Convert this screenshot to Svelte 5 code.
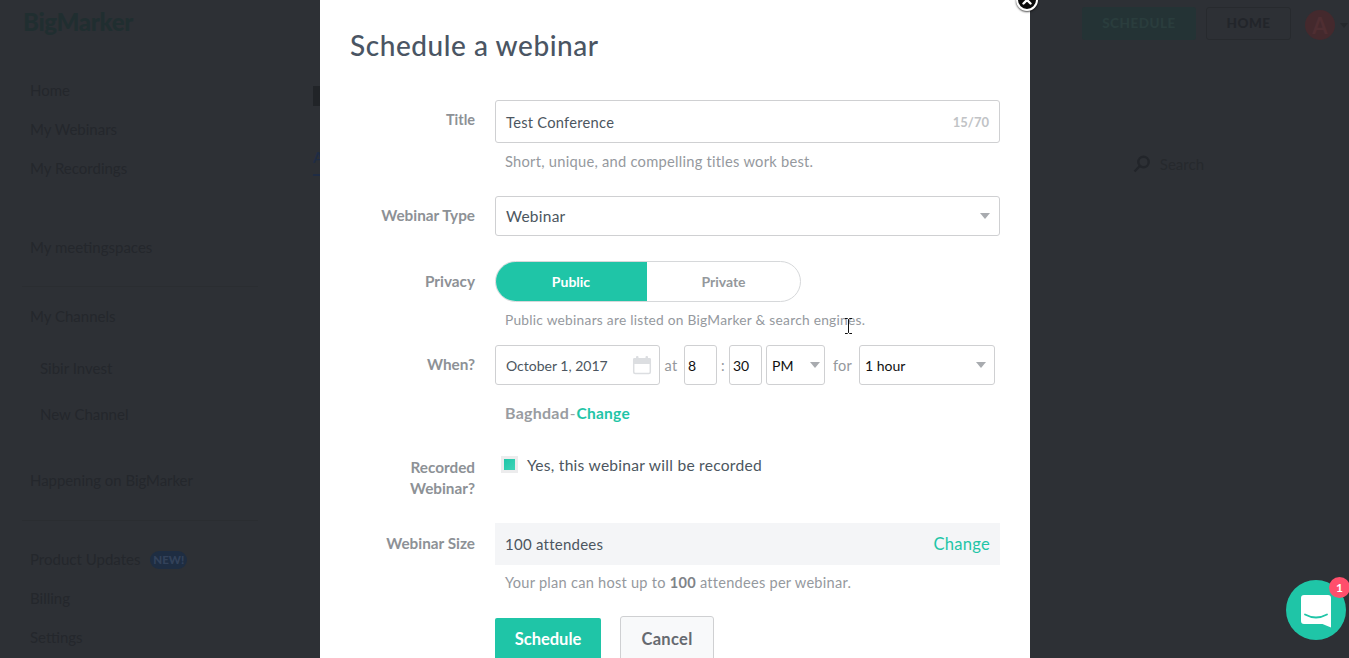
<script>
  const nav = [
    { label: 'Home', cls: '' },
    { label: 'My Webinars', cls: '' },
    { label: 'My Recordings', cls: 'gap-after' },
    { label: 'My meetingspaces', cls: 'rule-after' },
    { label: 'My Channels', cls: '' }
  ];
  const channels = ['Sibir Invest', 'New Channel'];
</script>

<div class="page">
  <header class="top">
    <div class="logo">BigMarker</div>
    <div class="top-actions">
      <div class="btn-dark-green">SCHEDULE</div>
      <div class="btn-dark-outline">HOME</div>
      <div class="avatar">A</div>
      <span class="avatar-caret"></span>
    </div>
  </header>

  <div class="body">
    <aside class="side">
      {#each nav as item}
        <div class="nav-item {item.cls}">{item.label}</div>
      {/each}
      <div class="channels">
        {#each channels as c}
          <div class="channel">{c}</div>
        {/each}
      </div>
      <div class="nav-item rule-after happening">Happening on BigMarker</div>
      <div class="nav-item">Product Updates <span class="new">NEW!</span></div>
      <div class="nav-item">Billing</div>
      <div class="nav-item">Settings</div>
    </aside>
    <main class="content">
      <div class="content-block"></div>
      <div class="tabs">
        <div class="tab">All</div>
        <div class="search">
          <svg width="18" height="18" viewBox="0 0 18 18" fill="none" stroke="#22252a" stroke-width="2.4"><circle cx="10.5" cy="7" r="5.2"/><path d="M6.8 11 1.5 16.5"/></svg>
          <span>Search</span>
        </div>
      </div>
    </main>
  </div>

  <section class="modal">
    <h1>Schedule a webinar</h1>

    <div class="row title-row">
      <div class="label short">Title</div>
      <div class="field">
        <div class="box title-box"><span>Test Conference</span><span class="count">15/70</span></div>
        <p class="hint">Short, unique, and compelling titles work best.</p>
      </div>
    </div>

    <div class="row type-row">
      <div class="label">Webinar Type</div>
      <div class="field">
        <div class="box type-box"><span>Webinar</span><i class="caret"></i></div>
      </div>
    </div>

    <div class="row privacy-row">
      <div class="label">Privacy</div>
      <div class="field">
        <div class="toggle">
          <div class="opt on">Public</div>
          <div class="opt off">Private</div>
        </div>
        <p class="hint small">Public webinars are listed on BigMarker &amp; search engines.</p>
      </div>
    </div>

    <div class="row when-row">
      <div class="label">When?</div>
      <div class="field">
        <div class="when">
          <div class="box date">
            <span>October 1, 2017</span>
            <svg width="20" height="20" viewBox="0 0 20 20">
              <path d="M1 4.500A1.500 1.500 0 0 1 2.500 3H17.500A1.500 1.500 0 0 1 19 4.500V9H1Z" fill="#dcdee1"/>
              <rect x="1.700" y="3.700" width="16.600" height="14.800" rx="1.500" fill="none" stroke="#dcdee1" stroke-width="1.500"/>
              <rect x="4" y="1" width="2.500" height="4" rx="1" fill="#dcdee1"/>
              <rect x="13.500" y="1" width="2.500" height="4" rx="1" fill="#dcdee1"/>
            </svg>
          </div>
          <span class="word at">at</span>
          <div class="box mini hour">8</div>
          <span class="word colon">:</span>
          <div class="box mini minute">30</div>
          <div class="box ampm"><span>PM</span><i class="caret"></i></div>
          <span class="word for">for</span>
          <div class="box duration"><span>1 hour</span><i class="caret"></i></div>
        </div>
        <div class="zone"><b>Baghdad</b> - <a href="#change">Change</a></div>
      </div>
    </div>

    <div class="row rec-row">
      <div class="label">Recorded Webinar?</div>
      <div class="field rec">
        <span class="check"><span></span></span>
        <span>Yes, this webinar will be recorded</span>
      </div>
    </div>

    <div class="row size-row">
      <div class="label">Webinar Size</div>
      <div class="field">
        <div class="size"><span>100 attendees</span><a href="#size">Change</a></div>
        <p class="hint">Your plan can host up to <b>100</b> attendees per webinar.</p>
      </div>
    </div>

    <div class="row actions">
      <div></div>
      <div class="field buttons">
        <div class="primary">Schedule</div>
        <div class="secondary">Cancel</div>
      </div>
    </div>
  </section>

  <div class="close">
    <svg width="10" height="10" viewBox="0 0 10 10" stroke="#fff" stroke-width="2.400" stroke-linecap="round"><path d="M1.500 1.500 8.500 8.500M8.500 1.500 1.500 8.500"/></svg>
  </div>

  <div class="chat">
    <svg width="30" height="33" viewBox="0 0 30 33">
      <path d="M3 0H27A3 3 0 0 1 30 3V32.500L21.500 29H3A3 3 0 0 1 0 26V3A3 3 0 0 1 3 0Z" fill="#fff"/>
      <path d="M4 19.500Q15 25.500 26 19.500" fill="none" stroke="#1fc5a7" stroke-width="1.800" stroke-linecap="round"/>
    </svg>
    <span class="badge">1</span>
  </div>

  <svg class="ibeam" width="9" height="16" viewBox="0 0 9 16" fill="none" stroke="#111" stroke-width="1"><path d="M1 .5H3.500L4.500 1.500 5.500 .5H8M4.500 1.500V14.500M1 15.500H3.500L4.500 14.500 5.500 15.500H8"/></svg>
</div>

<style>
  :global(body) { margin: 0; }
  .page {
    position: relative; width: 1349px; height: 658px; overflow: hidden;
    background: #2d3035; color: #24272c;
    font-family: Lato, "Open Sans", sans-serif; font-size: 15px;
  }
  .top { height: 71px; display: flex; justify-content: space-between; align-items: flex-start; padding: 6px 0 0 23px; box-sizing: border-box; }
  .logo { font-size: 24px; line-height: 31px; font-weight: 900; color: #202e30; letter-spacing: -.3px; }
  .top-actions { display: flex; align-items: center; }
  .btn-dark-green, .btn-dark-outline { height: 33px; box-sizing: border-box; border-radius: 3px; font-size: 13.500px; font-weight: 900; display: flex; align-items: center; justify-content: center; letter-spacing: .5px; }
  .btn-dark-green { width: 114px; background: #243335; color: #2a3d3d; }
  .btn-dark-outline { width: 85px; margin-left: 10px; border: 1px solid #272a2e; color: #22252a; }
  .avatar { width: 30px; height: 30px; border-radius: 50%; margin: 4px 0 0 14px; background: #44292d; color: #4f2e32; display: flex; align-items: center; justify-content: center; font-size: 22px; font-weight: 700; }
  .avatar-caret { width: 0; height: 0; margin: 4px 1px 0 5px; border: 4px solid transparent; border-top: 5px solid #25282c; border-bottom: 0; }

  .body { display: flex; }
  .side { width: 313px; flex: none; padding-left: 30px; box-sizing: border-box; }
  .nav-item { height: 39px; line-height: 39px; white-space: nowrap; position: relative; }
  .gap-after { margin-bottom: 40px; }
  .rule-after { margin-bottom: 30px; }
  .rule-after::after { content: ''; position: absolute; left: -8px; width: 236px; bottom: -20px; height: 1px; background: #2a2d31; }
  .channels { margin-top: 9px; margin-bottom: 24px; padding-left: 10px; }
  .channel { height: 46px; line-height: 46px; }
  .happening { margin-bottom: 40px; font-size: 14.900px; }
  .happening::after { bottom: -21px; }
  .new { display: inline-block; margin-left: 6px; padding: 0 3px; height: 18px; line-height: 18px; border-radius: 9px; background: #1e2d42; color: #33425a; font-size: 11.500px; font-weight: 900; vertical-align: 1px; }

  .content { flex: 1; }
  .content-block { width: 20px; height: 20px; margin-top: 15px; background: #212428; }
  .tabs { margin-top: 39px; display: flex; justify-content: space-between; align-items: flex-start; padding-right: 145px; }
  .tab { width: 20px; height: 29px; overflow: hidden; color: #1f2c44; border-bottom: 2px solid #1f2c44; font-weight: 700; line-height: 24px; }
  .search { display: flex; align-items: center; gap: 9px; color: #26292d; height: 26px; margin-top: 6px; }

  .modal {
    position: absolute; left: 320px; top: 0; width: 710px; height: 720px;
    box-sizing: border-box; padding: 0 30px; background: #fff; color: #4c5660;
    letter-spacing: .25px;
  }
  h1 { margin: 0; padding-top: 28px; height: 71px; box-sizing: border-box; font-size: 28px; line-height: 34px; font-weight: 500; color: #4a5563; letter-spacing: .55px; }
  .row { display: grid; grid-template-columns: 125px 505px; column-gap: 20px; }
  .label { text-align: right; font-weight: 700; color: #8d9196; line-height: 21px; font-size: 15.300px; letter-spacing: 0; }
  .label.short { font-size: 14.500px; }
  .box { box-sizing: border-box; border: 1px solid #cfd0d2; border-radius: 3px; background: #fff; display: flex; align-items: center; }
  .hint { margin: 0; padding-left: 10px; font-size: 14.700px; line-height: 20px; color: #95999e; }
  .hint.small { font-size: 13.750px; }
  .hint b { font-weight: 700; color: #7f8388; }

  .title-row { margin-top: 29px; height: 96px; }
  .title-row .label { padding-top: 9px; }
  .title-box { height: 43px; justify-content: space-between; padding: 0 10px 0 10px; font-size: 14.700px; }
  .count { color: #c1c3c6; font-weight: 700; font-size: 13px; letter-spacing: 0; }
  .title-row .hint { margin-top: 8px; }

  .type-box { height: 40px; justify-content: space-between; padding: 0 9px 0 10px; font-size: 15.500px; line-height: 19px; }
  .type-row { height: 65px; }
  .type-row .label { padding-top: 9px; }
  .caret { width: 0; height: 0; border: 5px solid transparent; border-top: 6px solid #a8abaf; border-bottom: 0; }

  .privacy-row { height: 84px; }
  .privacy-row .label { padding-top: 10px; }
  .toggle { display: flex; width: 306px; height: 41px; box-sizing: border-box; border: 1px solid #d6d8da; border-radius: 21px; overflow: hidden; }
  .opt { display: flex; align-items: center; justify-content: center; font-size: 14px; font-weight: 700; letter-spacing: 0; padding-bottom: 1px; }
  .on { width: 152px; margin: -1px 0 -1px -1px; background: #1fc5a7; color: #fff; box-shadow: inset 0 1px 0 #19ad92; }
  .off { flex: 1; color: #94989c; }
  .privacy-row .hint { margin-top: 8px; }

  .when-row { height: 113px; }
  .when-row .label { padding-top: 9px; }
  .when { display: flex; align-items: center; height: 40px; }
  .date { width: 165px; height: 40px; padding: 0 7px 0 10px; justify-content: space-between; font-size: 14px; letter-spacing: 0; }
  .word { color: #94989c; font-size: 14.500px; }
  .at { width: 24px; text-align: center; margin-left: -1px; margin-right: 1px; }
  .colon { width: 12px; text-align: center; }
  .for { width: 23px; margin: 0 3px 0 8px; }
  .mini { width: 33px; height: 40px; padding-left: 3px; color: #111; font-size: 14px; letter-spacing: 0; }
  .hour { margin-left: 0; }
  .ampm { width: 59px; height: 40px; margin-left: 4px; padding: 0 4px 0 5px; justify-content: space-between; color: #111; font-size: 14px; letter-spacing: 0; }
  .duration { width: 136px; height: 40px; padding: 0 8px 0 5px; justify-content: space-between; color: #111; font-size: 14px; letter-spacing: 0; }
  .zone { padding: 18px 0 0 10px; font-size: 15.500px; line-height: 20px; color: #a0a3a7; word-spacing: -3.500px; }
  .zone b { color: #999ca1; font-weight: 700; font-size: 16px; }
  a { color: #1fc5a7; text-decoration: none; }
  .zone a { font-weight: 700; }

  .rec-row { height: 65px; }
  .rec-row .label { padding: 0 0 0 30px; margin-top: -1px; }
  .rec { display: flex; align-items: flex-start; padding: 0 0 0 6px; margin-top: -3px; gap: 9px; line-height: 20px; font-size: 15.600px; }
  .check { width: 17px; height: 17px; box-sizing: border-box; margin-top: 1px; border: 3px solid #ececed; display: block; flex: none; }
  .check span { display: block; width: 11px; height: 11px; background: linear-gradient(135deg, #1fc5a7, #3fd4b8); }

  .size-row { height: 93px; }
  .size-row .label { padding-top: 10px; }
  .size { height: 42px; background: #f4f5f7; display: flex; align-items: center; justify-content: space-between; padding: 0 10px; font-size: 15px; }
  .size a { font-size: 16.600px; margin-top: -1px; }
  .size-row .hint { margin-top: 8px; font-size: 14.600px; }

  .buttons { display: flex; align-items: flex-start; }
  .primary, .secondary { display: flex; align-items: center; justify-content: center; box-sizing: border-box; font-size: 16.500px; letter-spacing: 0; }
  .primary { width: 106px; height: 42px; margin-top: 2px; background: #1fc5a7; color: #fff; font-weight: 700; border-radius: 2px; }
  .secondary { width: 94px; height: 46px; margin-left: 19px; border: 1px solid #cfd0d2; border-radius: 3px; background: #f8f9fa; color: #666a70; font-weight: 700; letter-spacing: .3px; }

  .close { position: absolute; left: 1016px; top: -11px; width: 22px; height: 22px; box-sizing: border-box; border: 2px solid #fff; border-radius: 50%; background: #0b0b0b; box-shadow: 0 1px 2px rgba(0,0,0,.7); display: flex; align-items: center; justify-content: center; }
  .chat { position: absolute; left: 1286px; top: 580px; width: 60px; height: 60px; border-radius: 50%; background: #1fc5a7; display: flex; align-items: center; justify-content: center; }
  .chat svg { margin-top: 2px; }
  .badge { position: absolute; left: 43px; top: -3px; width: 21px; height: 21px; border-radius: 50%; background: #ff4f6c; color: #fff; font-size: 12px; font-weight: 700; display: flex; align-items: center; justify-content: center; }
  .ibeam { position: absolute; left: 844px; top: 318px; }
</style>
